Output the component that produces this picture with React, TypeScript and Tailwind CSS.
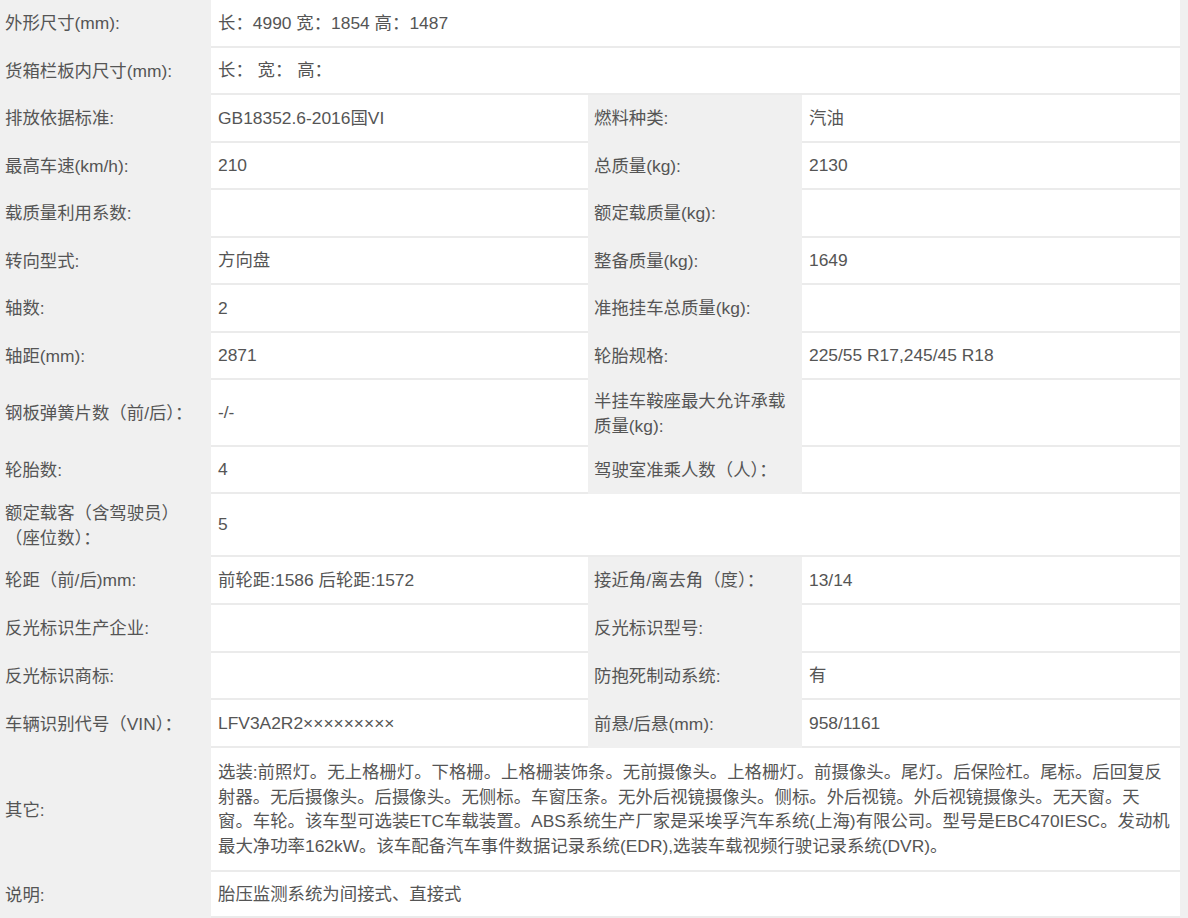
import React from "react";

type Row = {
  h: string;
  l1: React.ReactNode;
  v1?: React.ReactNode;
  l2?: React.ReactNode;
  v2?: React.ReactNode;
  full?: boolean;
};

const rows: Row[] = [
  { h: "h-[47.5px]", l1: "外形尺寸(mm):", v1: "长：4990 宽：1854 高：1487", full: true },
  { h: "h-[47.5px]", l1: "货箱栏板内尺寸(mm):", v1: "长： 宽： 高：", full: true },
  { h: "h-[47.5px]", l1: "排放依据标准:", v1: "GB18352.6-2016国VI", l2: "燃料种类:", v2: "汽油" },
  { h: "h-[47.5px]", l1: "最高车速(km/h):", v1: "210", l2: "总质量(kg):", v2: "2130" },
  { h: "h-[47.5px]", l1: "载质量利用系数:", v1: "", l2: "额定载质量(kg):", v2: "" },
  { h: "h-[47.5px]", l1: "转向型式:", v1: "方向盘", l2: "整备质量(kg):", v2: "1649" },
  { h: "h-[47.5px]", l1: "轴数:", v1: "2", l2: "准拖挂车总质量(kg):", v2: "" },
  { h: "h-[47.5px]", l1: "轴距(mm):", v1: "2871", l2: "轮胎规格:", v2: "225/55 R17,245/45 R18" },
  {
    h: "h-[67px]",
    l1: "钢板弹簧片数（前/后）：",
    v1: "-/-",
    l2: (
      <>
        半挂车鞍座最大允许承载
        <br />
        质量(kg):
      </>
    ),
    v2: "",
  },
  { h: "h-[47px]", l1: "轮胎数:", v1: "4", l2: "驾驶室准乘人数（人）：", v2: "" },
  {
    h: "h-[63px]",
    l1: (
      <>
        额定载客（含驾驶员）
        <br />
        （座位数）：
      </>
    ),
    v1: "5",
    full: true,
  },
  { h: "h-[47.75px]", l1: "轮距（前/后)mm:", v1: "前轮距:1586 后轮距:1572", l2: "接近角/离去角（度）：", v2: "13/14" },
  { h: "h-[47.75px]", l1: "反光标识生产企业:", v1: "", l2: "反光标识型号:", v2: "" },
  { h: "h-[47.75px]", l1: "反光标识商标:", v1: "", l2: "防抱死制动系统:", v2: "有" },
  { h: "h-[47.75px]", l1: "车辆识别代号（VIN）：", v1: "LFV3A2R2×××××××××", l2: "前悬/后悬(mm):", v2: "958/1161" },
  {
    h: "h-[124px]",
    l1: "其它:",
    v1: (
      <div className="leading-[24.5px] whitespace-nowrap">
        <div>选装:前照灯。无上格栅灯。下格栅。上格栅装饰条。无前摄像头。上格栅灯。前摄像头。尾灯。后保险杠。尾标。后回复反</div>
        <div>射器。无后摄像头。后摄像头。无侧标。车窗压条。无外后视镜摄像头。侧标。外后视镜。外后视镜摄像头。无天窗。天</div>
        <div>窗。车轮。该车型可选装ETC车载装置。ABS系统生产厂家是采埃孚汽车系统(上海)有限公司。型号是EBC470IESC。发动机</div>
        <div>最大净功率162kW。该车配备汽车事件数据记录系统(EDR),选装车载视频行驶记录系统(DVR)。</div>
      </div>
    ),
    full: true,
  },
  { h: "h-[46px]", l1: "说明:", v1: "胎压监测系统为间接式、直接式", full: true },
];

export default function App() {
  return (
    <div
      className="w-[1188px] h-[918px] overflow-hidden bg-[#f0f0f0] text-[17.4px] text-[#555555]"
      style={{ fontFamily: '"Liberation Sans", "Noto Sans CJK SC", sans-serif' }}
    >
      <div className="flex flex-col w-[1180px]">
        {rows.map((r, i) => (
          <div key={i} className={`flex ${r.h}`}>
            <div className="w-[211px] shrink-0 flex items-center pl-[5px] pr-1 leading-[25px]">
              <div>{r.l1}</div>
            </div>
            {r.full ? (
              <div className="flex-1 bg-white border-b-2 border-[#ebebeb] flex items-center pl-[7px]">
                {r.v1}
              </div>
            ) : (
              <>
                <div className="w-[377px] shrink-0 bg-white border-b-2 border-[#ebebeb] flex items-center pl-[7px]">
                  {r.v1}
                </div>
                <div className="w-[214px] shrink-0 flex items-center pl-[6px] pr-1 leading-[25px]">
                  <div>{r.l2}</div>
                </div>
                <div className="flex-1 bg-white border-b-2 border-[#ebebeb] flex items-center pl-[7px]">
                  {r.v2}
                </div>
              </>
            )}
          </div>
        ))}
      </div>
    </div>
  );
}
